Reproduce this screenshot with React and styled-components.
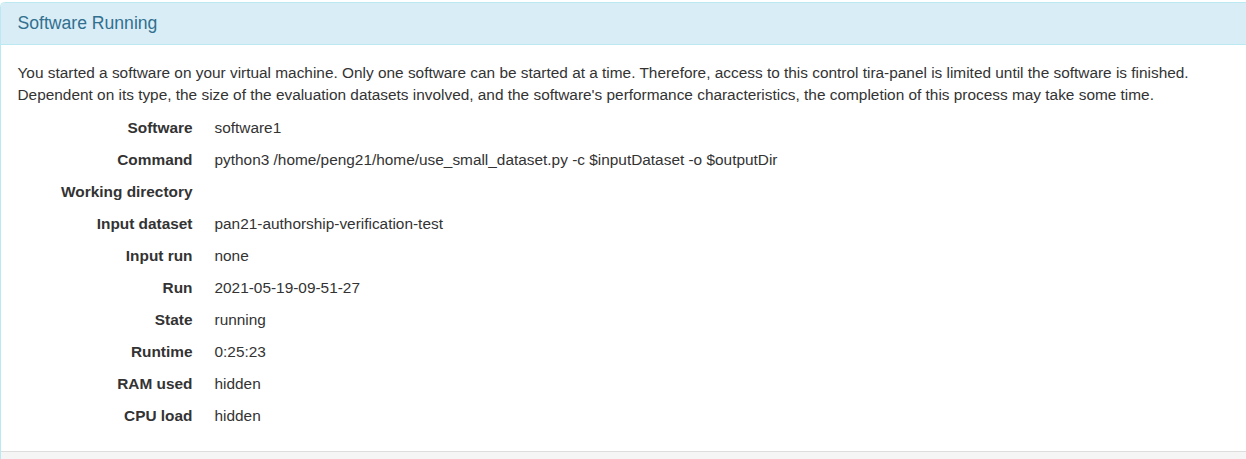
import React from "react";
import styled, { createGlobalStyle } from "styled-components";

const Global = createGlobalStyle`
  html, body { margin: 0; padding: 0; overflow: hidden; background: #fff; }
  body { font-family: "Liberation Sans", Arial, Helvetica, sans-serif; font-size: 15.4px; line-height: 22px; color: #333; }
`;

const Page = styled.div`
  padding-top: 2px;
  width: 1246px;
  overflow: hidden;
`;

const Panel = styled.section`
  width: 1280px;
  border: 1px solid #bce8f1;
  border-radius: 4.4px;
  background: #fff;
  box-sizing: border-box;
`;

const Heading = styled.header`
  background: #d9edf7;
  color: #31708f;
  border-bottom: 1px solid #bce8f1;
  padding: 11px 16.5px;
  border-radius: 3px 3px 0 0;
`;

const Title = styled.h3`
  margin: 0;
  font-size: 17.6px;
  line-height: 19.4px;
  font-weight: 400;
`;

const Body = styled.div`
  padding: 16.5px 16.5px 19px;
`;

const Intro = styled.p`
  margin: 0 0 6px;
  width: 1200px;
`;

const Details = styled.dl`
  display: grid;
  grid-template-columns: 175px 1fr;
  grid-auto-rows: 32px;
  column-gap: 22px;
  margin: 0;
`;

const Label = styled.dt`
  font-weight: 700;
  text-align: right;
  display: flex;
  align-items: center;
  justify-content: flex-end;
`;

const Value = styled.dd`
  margin: 0;
  display: flex;
  align-items: center;
`;

const Footer = styled.footer`
  background: #f5f5f5;
  border-top: 1px solid #ddd;
  height: 30px;
`;

const rows = [
  ["Software", "software1"],
  ["Command", "python3 /home/peng21/home/use_small_dataset.py -c $inputDataset -o $outputDir"],
  ["Working directory", ""],
  ["Input dataset", "pan21-authorship-verification-test"],
  ["Input run", "none"],
  ["Run", "2021-05-19-09-51-27"],
  ["State", "running"],
  ["Runtime", "0:25:23"],
  ["RAM used", "hidden"],
  ["CPU load", "hidden"],
];

export default function App() {
  return (
    <Page>
      <Global />
      <Panel>
        <Heading>
          <Title>Software Running</Title>
        </Heading>
        <Body>
          <Intro>
            You started a software on your virtual machine. Only one software can be started at a time. Therefore, access to this control tira-panel is limited until the software is finished. Dependent on its type, the size of the evaluation datasets involved, and the software's performance characteristics, the completion of this process may take some time.
          </Intro>
          <Details>
            {rows.map(([k, v]) => (
              <React.Fragment key={k}>
                <Label>{k}</Label>
                <Value>{v}</Value>
              </React.Fragment>
            ))}
          </Details>
        </Body>
        <Footer />
      </Panel>
    </Page>
  );
}
